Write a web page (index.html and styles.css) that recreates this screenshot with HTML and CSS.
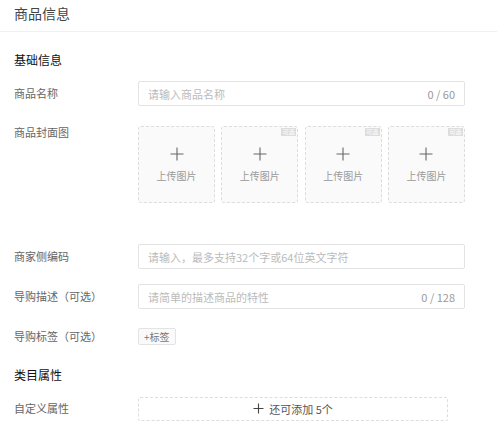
FILE: index.html
```html
<!DOCTYPE html>
<html lang="zh-CN">
<head>
<meta charset="utf-8">
<title>商品信息</title>
<link rel="stylesheet" href="styles.css">
</head>
<body>
<div class="page">
  <div class="header">商品信息</div>

  <div class="section-title first">基础信息</div>

  <div class="row row-first">
    <div class="label">商品名称</div>
    <div class="input">
      <span class="placeholder">请输入商品名称</span>
      <span class="counter">0 / 60</span>
    </div>
  </div>

  <div class="row row-cover">
    <div class="label label-top">商品封面图</div>
    <div class="uploads">
      <div class="upload">
        <svg class="plus" width="14" height="14" viewBox="0 0 14 14"><path d="M7 0.5V13.5M0.5 7H13.5" stroke="#666" stroke-width="1.1" fill="none"/></svg>
        <span class="upload-text">上传图片</span>
      </div>
      <div class="upload">
        <span class="badge">可选</span>
        <svg class="plus" width="14" height="14" viewBox="0 0 14 14"><path d="M7 0.5V13.5M0.5 7H13.5" stroke="#666" stroke-width="1.1" fill="none"/></svg>
        <span class="upload-text">上传图片</span>
      </div>
      <div class="upload">
        <span class="badge">可选</span>
        <svg class="plus" width="14" height="14" viewBox="0 0 14 14"><path d="M7 0.5V13.5M0.5 7H13.5" stroke="#666" stroke-width="1.1" fill="none"/></svg>
        <span class="upload-text">上传图片</span>
      </div>
      <div class="upload">
        <span class="badge">可选</span>
        <svg class="plus" width="14" height="14" viewBox="0 0 14 14"><path d="M7 0.5V13.5M0.5 7H13.5" stroke="#666" stroke-width="1.1" fill="none"/></svg>
        <span class="upload-text">上传图片</span>
      </div>
    </div>
  </div>

  <div class="row row-code">
    <div class="label">商家侧编码</div>
    <div class="input">
      <span class="placeholder">请输入，最多支持32个字或64位英文字符</span>
    </div>
  </div>

  <div class="row">
    <div class="label">导购描述（可选）</div>
    <div class="input">
      <span class="placeholder">请简单的描述商品的特性</span>
      <span class="counter">0 / 128</span>
    </div>
  </div>

  <div class="row">
    <div class="label">导购标签（可选）</div>
    <div class="tag-btn">+标签</div>
  </div>

  <div class="section-title">类目属性</div>

  <div class="row row-first">
    <div class="label">自定义属性</div>
    <div class="add-box">
      <svg width="11" height="11" viewBox="0 0 11 11"><path d="M5.5 0.5V10.5M0.5 5.5H10.5" stroke="#444" stroke-width="1.1" fill="none"/></svg>
      <span>还可添加 5个</span>
    </div>
  </div>
</div>
</body>
</html>
```

FILE: styles.css
```css
html, body {
  margin: 0;
  padding: 0;
  background: #fff;
}

.page {
  font-family: "Noto Sans CJK SC", "Noto Sans", sans-serif;
  color: #666;
  width: 497px;
}

.header {
  height: 32px;
  box-sizing: border-box;
  padding: 3px 0 0 14px;
  font-size: 14px;
  line-height: 20px;
  color: #444;
  border-bottom: 1px solid #f0f0f0;
}

.section-title {
  margin: 16px 0 0 14px;
  font-size: 12px;
  line-height: 20px;
  height: 20px;
  color: #111;
  font-weight: 400;
}

.section-title.first {
  margin-top: 18px;
}

.row {
  display: flex;
  align-items: center;
  height: 25px;
  margin-top: 15px;
  padding-left: 14px;
}

.row-first {
  margin-top: 11px;
}

.label {
  width: 124px;
  flex: none;
  font-size: 11px;
  line-height: 25px;
  color: #666;
}

.row-cover {
  height: auto;
  align-items: flex-start;
  margin-top: 20px;
}

.label-top {
  line-height: 13px;
}

.row-code {
  margin-top: 41px;
}

.input {
  width: 327px;
  height: 25px;
  box-sizing: border-box;
  border: 1px solid #e3e3e3;
  border-radius: 2px;
  display: flex;
  align-items: center;
  justify-content: space-between;
  padding: 0 9px 0 9px;
  font-size: 11px;
}

.placeholder {
  color: #bbb;
}

.counter {
  color: #999;
}

.uploads {
  width: 327px;
  display: grid;
  grid-template-columns: repeat(4, 1fr);
  column-gap: 6.33px;
}

.upload {
  position: relative;
  height: 77px;
  box-sizing: border-box;
  border: 1px dashed #ddd;
  border-radius: 3px;
  background: #fafafa;
  display: flex;
  flex-direction: column;
  align-items: center;
  justify-content: flex-start;
}

.plus {
  margin-top: 20px;
}

.upload-text {
  margin-top: 8px;
  font-size: 10px;
  line-height: 14px;
  color: #999;
}

.badge {
  position: absolute;
  top: 1px;
  right: 1px;
  width: 15px;
  height: 8px;
  background: #ddd;
  color: #fff;
  font-size: 6px;
  line-height: 8px;
  text-align: center;
  overflow: hidden;
}

.tag-btn {
  height: 17px;
  box-sizing: border-box;
  padding: 0 5px;
  border: 1px solid #e3e3e3;
  border-radius: 2px;
  background: #fafafa;
  font-size: 10px;
  line-height: 15px;
  color: #777;
}

.add-box {
  width: 310px;
  height: 24px;
  box-sizing: border-box;
  border: 1px dashed #ddd;
  border-radius: 2px;
  display: flex;
  align-items: center;
  justify-content: center;
  gap: 5px;
  font-size: 11px;
  color: #555;
}
```
